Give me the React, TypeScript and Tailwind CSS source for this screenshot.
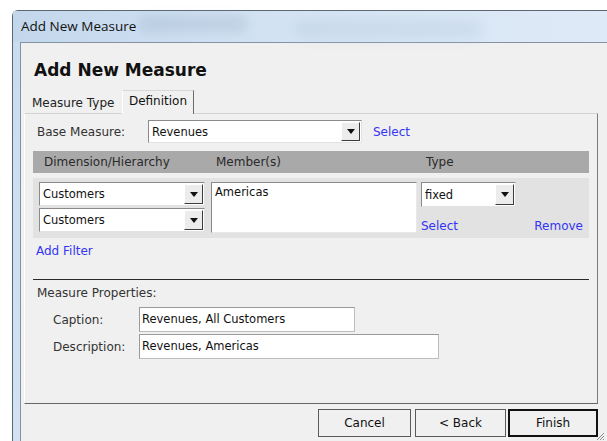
import React from 'react';

const ui = { fontFamily: '"DejaVu Sans", Verdana, sans-serif' };

function DropArrow() {
  return (
    <span className="flex h-full w-[19px] items-center justify-center border border-t-white border-l-white border-b-[#3c3c3c] border-r-[#3c3c3c] bg-[#ececec]">
      <svg width="8" height="5" viewBox="0 0 8 5">
        <path d="M0 0h8L4 5z" fill="#111" />
      </svg>
    </span>
  );
}

function Combo({ value, className }: { value: string; className: string }) {
  return (
    <div
      className={`flex items-stretch border border-t-[#8a8a8a] border-l-[#8a8a8a] border-b-[#e2e2e2] border-r-[#e2e2e2] bg-white p-[1px] ${className}`}
    >
      <span className="flex flex-1 items-center pl-[2px] text-[11.5px] text-[#111]">{value}</span>
      <DropArrow />
    </div>
  );
}

function TextField({ value, className }: { value: string; className: string }) {
  return (
    <div
      className={`flex items-center border border-[#9a9a9a] border-b-[#bdbdbd] border-r-[#bdbdbd] bg-white pb-[2px] pl-[2px] text-[11.5px] text-[#111] ${className}`}
    >
      {value}
    </div>
  );
}

export default function App() {
  return (
    <div className="h-[441px] w-[607px] overflow-hidden bg-white pl-[12px] pt-[10px]" style={ui}>
      {/* window frame */}
      <div className="flex h-[440px] w-[600px] flex-col rounded-tl-[6px] border-t border-l border-[#5b6773] bg-gradient-to-b from-[#c9dcf0] to-[#d2e2f3]">
        {/* caption bar */}
        <div className="relative flex h-[31px] items-center bg-gradient-to-r from-[#c3d7ec] via-[#d5e4f4] to-[#dfeaf7] pl-[8px]">
          <div className="absolute left-[125px] top-[4px] h-[18px] w-[110px] rounded-full bg-[#9fb3c9] opacity-30 blur-[4px]" />
          <div className="absolute left-[280px] top-[8px] h-[20px] w-[190px] rounded-full bg-[#b1c5da] opacity-30 blur-[6px]" />
          <span className="relative text-[13.5px] text-[#111]" style={{ fontFamily: '"Open Sans", sans-serif' }}>
            Add New Measure
          </span>
        </div>

        {/* client area */}
        <div className="ml-[7px] flex flex-1 flex-col border-t border-l border-[#8393a3] bg-[#f0f0f0]">
          <div className="flex h-[45px] items-end pb-[9px] pl-[13px]">
            <h1 className="text-[17px] font-bold leading-none text-[#111]">Add New Measure</h1>
          </div>

          {/* tab strip */}
          <div className="ml-[3px] flex h-[25px] items-end">
            <div className="flex h-[21px] w-[98px] items-center pl-[8px] text-[12px] text-[#222]">Measure Type</div>
            <div className="relative -mb-px flex h-[24px] w-[72px] items-center justify-center border border-b-0 border-t-[#d8d8d8] border-l-white border-r-[#6d6d6d] bg-[#f0f0f0] pb-[3px] text-[12px] text-[#111]">
              Definition
            </div>
          </div>

          {/* tab page */}
          <div className="ml-[3px] flex h-[291px] w-[574px] flex-col border border-t-[#d4d4d4] border-l-white border-r-[#7a7a7a] border-b-[#666] bg-[#f0f0f0] text-[12px] leading-[14px]">
            <div className="mt-[6px] flex h-[23px] items-center">
              <span className="w-[123px] pl-[12px] text-[#333]">Base Measure:</span>
              <Combo value="Revenues" className="h-[23px] w-[214px]" />
              <span className="ml-[11px] text-[#3434f4]">Select</span>
            </div>

            {/* filter grid */}
            <div className="ml-[8px] mt-[8px] w-[556px]">
              <div className="grid h-[22px] grid-cols-[178px_210px_1fr] items-center bg-[#a9a9a9] text-[#2a2a2a]">
                <span className="pl-[11px]">Dimension/Hierarchy</span>
                <span className="pl-[5px]">Member(s)</span>
                <span className="pl-[5px]">Type</span>
              </div>
              <div className="mt-[5px] grid h-[60px] grid-cols-[178px_210px_1fr] bg-[#e2e2e2] pt-[4px]">
                <div className="flex flex-col gap-[2px] pl-[6px]">
                  <Combo value="Customers" className="h-[24px] w-[166px]" />
                  <Combo value="Customers" className="h-[24px] w-[166px]" />
                </div>
                <div className="h-[51px] w-[206px] border border-t-[#8a8a8a] border-l-[#8a8a8a] border-b-[#e8e8e8] border-r-[#e8e8e8] bg-white px-[3px] pt-[2px] text-[11.5px] text-[#111]">
                  Americas
                </div>
                <div className="flex flex-col">
                  <Combo value="fixed" className="h-[25px] w-[95px]" />
                  <div className="mt-[12px] flex justify-between pr-[6px] text-[#3434f4]">
                    <span>Select</span>
                    <span>Remove</span>
                  </div>
                </div>
              </div>
            </div>

            <span className="ml-[11px] mt-[6px] text-[#3434f4]">Add Filter</span>

            <div className="ml-[8px] mt-[21px] h-px w-[556px] bg-[#2a2a2a]" />

            <span className="ml-[12px] mt-[6px] text-[#333]">Measure Properties:</span>

            <div className="mt-[7px] flex flex-col gap-[2px]">
              <div className="flex items-center">
                <span className="w-[114px] pl-[28px] text-[#333]">Caption:</span>
                <TextField value="Revenues, All Customers" className="h-[25px] w-[216px]" />
              </div>
              <div className="flex items-center">
                <span className="w-[114px] pl-[28px] text-[#333]">Description:</span>
                <TextField value="Revenues, Americas" className="h-[25px] w-[300px]" />
              </div>
            </div>
          </div>

          {/* command buttons */}
          <div className="relative mt-[5px] flex h-[28px] w-[577px] justify-end text-[12px] text-[#111]">
            <button className="mr-[4px] h-full w-[93px] border border-[#5a5a5a] bg-[#f0f0f0]">Cancel</button>
            <button className="mr-[2px] h-full w-[91px] border border-[#5a5a5a] bg-[#f0f0f0]">&lt; Back</button>
            <button className="h-full w-[90px] border-2 border-[#111] bg-[#f0f0f0]">Finish</button>
            {/* size grip */}
            <svg className="absolute -right-[7px] bottom-[-4px]" width="9" height="9" viewBox="0 0 9 9">
              <path d="M8 1L1 8M8 4L4 8M8 7L7 8" stroke="#8c8c8c" strokeWidth="1" />
            </svg>
          </div>
        </div>
      </div>
    </div>
  );
}
